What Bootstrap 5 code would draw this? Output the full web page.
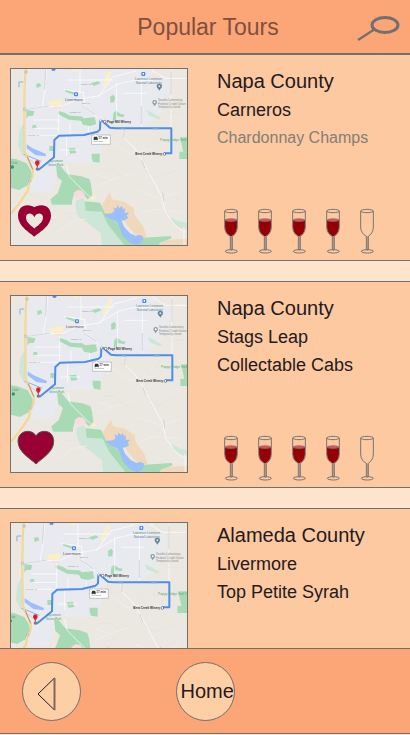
<!DOCTYPE html>
<html lang="en">
<head>
<meta charset="utf-8">
<meta name="viewport" content="width=device-width, initial-scale=1">
<title>Popular Tours</title>
<link href="https://cdn.jsdelivr.net/npm/bootstrap@5.3.0/dist/css/bootstrap.min.css" rel="stylesheet">
<style>
body{font-family:"Liberation Sans",Arial,sans-serif;color:#231a22;background:#fee4cc}
.app-shell{padding-bottom:1px}
.app-header{background:#fca577;border-bottom:2px solid #707070;height:55px}
.app-title{font-size:23px;line-height:28px;color:#80503f;padding-left:6px}
.search-btn{width:44px;margin-right:9px}
.tour-list{gap:20px;min-height:0}
.tour{background:#fdc9a0;border-top:1px solid #707070;border-bottom:1px solid #707070;padding:13px 10px 14px;gap:29px}
.tour:first-child{border-top:0}
.tour-map{width:178px;height:178px;border:1px solid #707070}
.fav{left:7px;top:136px}
.fav-large{left:6px;top:134px}
.tour-county{font-size:20px;line-height:26px;margin-bottom:2px}
.tour-line{font-size:18px;line-height:28px}
.tour-note{font-size:16px;line-height:28px;color:#808078}
.rating{gap:18px;padding-left:6px;margin-bottom:-8px}
.app-footer{background:#fca577;border-top:1px solid #707070;border-bottom:1px solid #707070;padding:13px 0 12px}
.round-btn{width:59px;height:59px;border:1px solid #707070;background:#fecfa5;color:#231a22}
.back-btn{margin-left:22px}
.home-btn{font-size:20px;line-height:24px;padding:0 0 2px 4px}
</style>
<script src="https://cdn.jsdelivr.net/npm/bootstrap@5.3.0/dist/js/bootstrap.bundle.min.js"></script>
</head>
<body>
<svg class="d-none" aria-hidden="true">
<defs>
<g id="map" font-family="Liberation Sans, Arial, sans-serif">
<rect x="0" y="0" width="620" height="600" fill="#ebe8e1"/>
<path fill="#e8eaef" d="M0 0H440L475 24 440 70 455 110 425 130 440 160 432 200 330 198 318 235 300 292 300 308H170L178 345 150 395 95 395 88 340 70 240 70 24H0Z"/>
<path fill="#e8eaef" d="M440 60l60-15 10 45-30 75-48 35-12-50Z" opacity=".8"/>
<path fill="#ebe8e1" d="M0 110l60 15 10 60-10 70-60 20Z"/>
<!-- parks -->
<g fill="#cde6d8">
<path d="M70 190l-12 24-4 44 14 28 8-30ZM228 422l22-8 12 30 43 12 25 40 45 60H306l-4-36-37-30-30-20-9-30Z"/>
<path d="M512 472l24 12 28 6v20l-28-8-22-16ZM440 150l14 6 30 18-8 4-30-12Z"/>
</g>
<path fill="#f0d9ba" d="M306 436l24-40 6 22 36 7 28 18 4 22 26 35 10 32-30-4-25-28-14-20-30-10-30-10ZM478 552l22-12 64-4v22h-88Z"/>
<g fill="#a8dbb5">
<path d="M174 152l20 6 16 9 34 2 8 6 32-3 5 20-18 6-22-4-6-12-36-3-16-8-18-10Z"/>
<path d="M0 290l50 8 30 12 14 24 3 22-14 20-26 14-57-14Z"/>
<path d="M168 315l14 4 20 24 42 6 24 8 5 16 4 32-14 13-14-16-28 4-5 18v10h-60l-5-16 22-18 13-37-14-12Z"/>
<path d="M254 424l46 4 15 32 30 24 45 46 40 3 82-5 3 7-35 13-5 10H375l-50-63-20-40-48-3Z"/>
<path d="M330 110l10-6 5 8-2 14-12 2ZM79 150l24 4-4 14-14 0-6 8ZM340 160l8-8 14 10 12 2-4 8-18-4-4 14-10 0ZM205 265l20-2 4 16-18 2ZM275 281h24v27l-20-3-4-10ZM540 232h34v65h-36v-22h12Z"/>
<path d="M195 88l34 12-3 6-30-11ZM272 70l22-6 8 6-20 8ZM108 72l12-3 4 10-14 5ZM98 195l10 0 2 10-14 0ZM148 258l16 0v16l-16-2Z"/>
</g>
<path fill="#f9dadd" d="M220 400l12-10 14 2 10 12-8 8-22 2Z"/>
<path fill="#fbefc4" d="M145 124l38-6 8 14-26 8-18-4ZM306 78l18-44 12 2-8 22-14 24ZM272 411l12-3 2 9-11 2ZM215 25h22l-8 7h-12ZM75 25h14l2 6-12 4Z"/>
<path fill="#f5dfdf" d="M160 135l24 2-4 10-18-2Z"/>
<!-- lakes and creek -->
<g fill="#9bbffa">
<path d="M312 462L336 460 344 452 340 442 350 446 352 436 358 444 366 438 369 448 375 444 374 458 387 458 380 467 385 473 375 480 365 482 372 500 390 520 408 528 418 524 430 530 426 545 418 552 408 556 385 545 366 525 356 495 346 483 326 474Z"/>
<path d="M80 253l18 12 40 17-2 7-30-4-26-20Z"/>
</g>
<path d="M70 282l54 22M57 82V66h13" fill="none" stroke="#76a7ed" stroke-width="2.500"/>
<!-- streets -->
<g fill="none" stroke="#fff" stroke-width="2">
<path d="M78 148l70-8 40-2 44-20 62-10 60-36 45-10h60M140 24l-4 60-10 60M176 148v80M82 226h90M250 95l6 50 36 28M296 110l40-58 74-20M424 60v140M513 30v175M190 88l60 10M100 180h80M200 60h140M210 190v38M350 70v110M100 205h76M240 28v70M370 100h70M265 200v26M178 270h60M200 228v60"/>
<path d="M368 205l4 28 30 30 26 40 32 60 25 46 10 46 28 38 24 20M200 316l8 34 60 60M552 500v60"/>
<path d="M564 55l-70 0-40-25"/>
</g>
<g fill="none" stroke="#f0eee9" stroke-width="3">
<path d="M60 475l54-8 60 6M170 520l40-32 48-12M290 345l48 14 60-20M330 240l60 42 66-15M410 390l70 26 64-22M420 460l46-12 80 8M290 380l48-22"/>
</g>
<g fill="none" stroke="#e3e0d9" stroke-width="1.500">
<path d="M190 460l46 0 34 25M80 400l60 20 30 25M425 325l48 30 60-28M425 236l20 26-14 26M300 328l40 0 34 30M480 130l30 30 50 0M465 246l14-30"/>
</g>
<g fill="none" stroke="#c6c7ca" stroke-width="2"><path d="M137 28l-3 60M424 138v54M513 35v70M248 138l36 26M372 208l-1 26M70 285l42 32M488 398l3 26M425 300l10 24M80 148l66-9"/></g>
<!-- highway -->
<path d="M77 24l-3 50-1 74 1 125 8 20 17 38-2 22-9 10-4 28-20 30-14 20-18 20-14 8" fill="none" stroke="#f6d083" stroke-width="6"/>
<path d="M77 24l-3 50-1 74 1 125 8 20 17 38-2 22-9 10-4 28-20 30-14 20-18 20" fill="none" stroke="#fbe1a6" stroke-width="2"/>
<path d="M82 290l16 38" stroke="#bd9175" stroke-width="3"/>
<g fill="#e0e1e2" stroke="#a9adb0" stroke-width="2"><circle cx="78" cy="36" r="4"/><circle cx="74" cy="148" r="4"/><circle cx="89" cy="363" r="4"/></g>
<!-- route -->
<path d="M115 330l47-38 1-52 14-13 75-2 25-6 16-4 7-7 1-25 6 0 23 20 16 2h168v75h-21" fill="none" stroke="#4d8deb" stroke-width="6" stroke-linejoin="round"/>
<path d="M362 205h12M458 205h18" stroke="#7aa5df" stroke-width="5"/>
<!-- markers -->
<g fill="#4b8be4"><path d="M153 24h15l-3 8h-9Z"/><rect x="222" y="97" width="12" height="12" rx="3"/><rect x="424" y="36" width="12" height="12" rx="3"/></g>
<g fill="#fff"><rect x="226" y="100" width="4" height="5"/><rect x="428" y="39" width="4" height="5"/></g>
<path d="M478 92c-3-6-8-8-8-13a8 8 0 0 1 16 0c0 5-5 7-8 13Z" fill="#608397"/><circle cx="478" cy="79" r="3" fill="#dce9ef"/>
<path d="M464 139c-3-6-7-8-7-12a7 7 0 0 1 14 0c0 4-4 6-7 12Z" fill="#899caa"/><circle cx="464" cy="127" r="3" fill="#fff"/>
<circle cx="37" cy="321" r="5" fill="#359566"/>
<circle cx="112" cy="327" r="5" fill="#807b7d"/>
<path d="M112 325c-1-10-7-11-7-17a7 7 0 0 1 14 0c0 6-6 7-7 17Z" fill="#df2929"/><circle cx="112" cy="308" r="2" fill="#871e1e"/>
<g fill="#fff" stroke="#555" stroke-width="2"><circle cx="314" cy="185" r="4"/><circle cx="493" cy="282" r="4"/></g>
<circle cx="302" cy="182" r="3" fill="#fff" stroke="#777"/>
<path d="M275 225h8l4-5 4 5h40v28h-56Z" fill="#fff" stroke="#aaa" stroke-width="2"/>
<path d="M281 241v-7l2-4h8l2 4v7h-3v-2h-6v2Z" fill="#333"/>
<g font-size="9">
<text x="195" y="123" font-size="12" fill="#555">Livermore</text>
<g fill="#678391"><text x="405" y="59" font-size="9">Lawrence Livermore</text><text x="407" y="71" font-size="9">National Laboratory</text></g>
<g fill="#8b8e90"><text x="474" y="124">Sandia Laboratory</text><text x="474" y="134">Federal Credit Union</text><text x="474" y="143" font-size="8">Temporarily closed</text></g>
<g font-weight="bold" fill="#333"><text x="321" y="188" font-size="9">Page Mill Winery</text><text x="406" y="285" font-size="9">Bent Creek Winery</text><text x="295" y="238">17 min</text></g>
<text x="281" y="247" font-size="7" fill="#666">8.5 miles</text>
<text x="480" y="242" font-size="10" fill="#57aa7e">Poppy Ridge Golf Course</text>
<g fill="#4f9c78"><text x="148" y="307">Sycamore</text><text x="144" y="318">Grove Park</text><text x="33" y="311">Club</text></g>
<g fill="#888" font-size="6"><text x="243" y="74">Portola Ave</text><text x="246" y="131">East Ave</text><text x="210" y="159">College Ave</text><text x="82" y="228">Vineyard Ave</text></g>
</g>
</g>
<g id="glass-outline" fill="none" stroke="#777575" stroke-width="3">
<ellipse cx="63" cy="48" rx="19" ry="5"/>
<path d="M44 48v48c0 15 8 23 17 28v41M82 48v48c0 15-8 23-15 28v41"/>
<path d="M64 124v44" stroke-width="2"/>
<ellipse cx="64" cy="169" rx="18" ry="5"/>
</g>
<symbol id="glass-full" viewBox="39 39 48 138">
<path d="M45 75h36v22c0 14-8 22-16 27h-4c-8-5-16-13-16-27Z" fill="#940006"/>
<ellipse cx="63" cy="75" rx="18" ry="5" fill="#c45b62"/>
<path d="M46 76c4 5 30 5 34 0" fill="none" stroke="#6e6661" stroke-width="2"/>
<use href="#glass-outline"/>
</symbol>
<symbol id="glass-empty" viewBox="39 39 48 138"><use href="#glass-outline"/></symbol>
</defs>
</svg>

<div class="app-shell d-flex flex-column vh-100 overflow-hidden">
<header class="app-header position-relative d-flex align-items-center flex-shrink-0">
<div class="search-btn invisible"></div>
<h1 class="app-title flex-grow-1 text-center mb-0 fw-normal">Popular Tours</h1>
<button type="button" class="search-btn btn p-0 border-0 d-flex" aria-label="Search">
<svg width="44" height="28" viewBox="0 0 44 28" fill="none" stroke="#707070"><ellipse cx="28" cy="12" rx="13" ry="7.500" stroke-width="3"/><path d="M1 27l17-11" stroke-width="2.200"/></svg>
</button>
</header>

<main class="tour-list d-flex flex-column flex-grow-1 overflow-hidden">
<article class="tour d-flex flex-shrink-0">
<div class="tour-map position-relative flex-shrink-0">
<svg class="d-block w-100 h-100" viewBox="33 27 528 528" role="img" aria-label="Route map"><use href="#map"/></svg>
<button type="button" class="fav btn p-0 border-0 d-flex position-absolute" aria-label="Remove from favorites">
<svg width="33" height="32" viewBox="54 165 99 95"><path fill="#990033" fill-rule="evenodd" d="M103 260C92 248 54 230 54 196C54 176 66 165 82 165C92 165 99 168 103 171C107 168 114 165 125 165C141 165 153 176 153 196C153 230 114 248 103 260ZM103 235C110 228 129 218 129 202C129 188 110 185 103 201C96 185 78 188 78 202C78 218 96 228 103 235Z"/></svg>
</button>
</div>
<div class="d-flex flex-column flex-grow-1">
<h2 class="tour-county fw-normal">Napa County</h2>
<p class="tour-line mb-0">Carneros</p>
<p class="tour-note mb-0">Chardonnay Champs</p>
<div class="rating d-flex mt-auto" role="img" aria-label="4 of 5 glasses">
<svg width="16" height="46"><use href="#glass-full"/></svg><svg width="16" height="46"><use href="#glass-full"/></svg><svg width="16" height="46"><use href="#glass-full"/></svg><svg width="16" height="46"><use href="#glass-full"/></svg><svg width="16" height="46"><use href="#glass-empty"/></svg>
</div>
</div>
</article>

<article class="tour d-flex flex-shrink-0">
<div class="tour-map position-relative flex-shrink-0">
<svg class="d-block w-100 h-100" viewBox="30 27 528 528" role="img" aria-label="Route map"><use href="#map"/></svg>
<button type="button" class="fav-large btn p-0 border-0 d-flex position-absolute" aria-label="Add to favorites">
<svg width="38" height="36" viewBox="51 28 114 108"><path fill="#990033" stroke="#5c5054" stroke-width="3" d="M108 130C92 114 54 95 54 62C54 44 66 32 83 32C95 32 104 38 108 46C112 38 121 32 133 32C150 32 161 44 161 62C161 95 124 114 108 130Z"/></svg>
</button>
</div>
<div class="d-flex flex-column flex-grow-1">
<h2 class="tour-county fw-normal">Napa County</h2>
<p class="tour-line mb-0">Stags Leap</p>
<p class="tour-line mb-0">Collectable Cabs</p>
<div class="rating d-flex mt-auto" role="img" aria-label="4 of 5 glasses">
<svg width="16" height="46"><use href="#glass-full"/></svg><svg width="16" height="46"><use href="#glass-full"/></svg><svg width="16" height="46"><use href="#glass-full"/></svg><svg width="16" height="46"><use href="#glass-full"/></svg><svg width="16" height="46"><use href="#glass-empty"/></svg>
</div>
</div>
</article>

<article class="tour d-flex flex-shrink-0">
<div class="tour-map flex-shrink-0">
<svg class="d-block w-100 h-100" viewBox="39 27 528 528" role="img" aria-label="Route map"><use href="#map"/></svg>
</div>
<div class="d-flex flex-column flex-grow-1">
<h2 class="tour-county fw-normal">Alameda County</h2>
<p class="tour-line mb-0">Livermore</p>
<p class="tour-line mb-0">Top Petite Syrah</p>
</div>
</article>
</main>

<footer class="app-footer flex-shrink-0">
<nav class="row g-0" aria-label="Main">
<div class="col">
<button type="button" class="round-btn back-btn btn rounded-circle p-0 d-flex" aria-label="Back">
<svg width="57" height="57" viewBox="0 0 57 57" fill="none" stroke="#231a22"><path d="M31.500 15L15 31l16.500 16Z"/><path d="M31.500 15v32" stroke="#80695a" stroke-width="2"/></svg>
</button>
</div>
<div class="col d-flex justify-content-center">
<button type="button" class="round-btn home-btn btn rounded-circle">Home</button>
</div>
<div class="col"></div>
</nav>
</footer>
</div>
</body>
</html>
